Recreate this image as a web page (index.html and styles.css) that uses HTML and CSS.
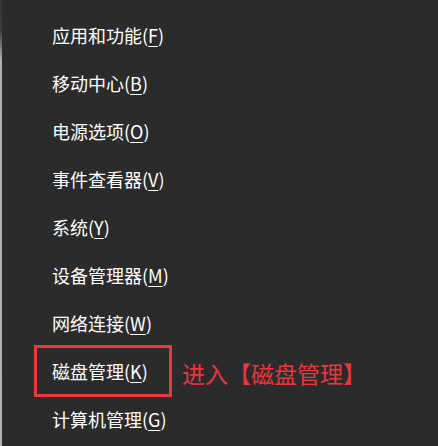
FILE: index.html
```html
<!DOCTYPE html>
<html lang="zh-CN">
<head>
<meta charset="utf-8">
<title>菜单</title>
<link rel="stylesheet" href="styles.css">
</head>
<body>
<div class="screen">
  <div class="edge"></div>
  <ul class="menu">
    <li class="item">应用和功能(<span class="key">F</span>)</li>
    <li class="item">移动中心(<span class="key">B</span>)</li>
    <li class="item">电源选项(<span class="key">O</span>)</li>
    <li class="item">事件查看器(<span class="key">V</span>)</li>
    <li class="item">系统(<span class="key">Y</span>)</li>
    <li class="item">设备管理器(<span class="key">M</span>)</li>
    <li class="item">网络连接(<span class="key">W</span>)</li>
    <li class="item item-marked">
      <span class="mark-box">磁盘管理(<span class="key">K</span>)</span>
      <span class="note">进入【磁盘管理】</span>
    </li>
    <li class="item">计算机管理(<span class="key">G</span>)</li>
  </ul>
</div>
</body>
</html>
```

FILE: styles.css
```css
html, body {
  margin: 0;
  padding: 0;
  background: #2b2b2b;
}

.screen {
  display: flex;
  width: 438px;
  height: 446px;
  overflow: hidden;
  background: #2b2b2b;
}

.edge {
  width: 2px;
  flex: none;
  background: linear-gradient(to bottom, #34372f 0px, #3a3d34 30px, #aeb2a4 60px, #b2b6a8 100%);
}

.menu {
  list-style: none;
  margin: 0;
  padding: 11px 0 0 50px;
  font-family: "Noto Sans CJK SC", "Microsoft YaHei", sans-serif;
  font-size: 18px;
  color: #ffffff;
}

.item {
  height: 48px;
  line-height: 48px;
  display: flex;
  align-items: center;
  white-space: nowrap;
}

.key {
  text-decoration: underline;
  text-decoration-thickness: 1px;
  text-underline-offset: 3px;
}

.mark-box {
  box-sizing: border-box;
  width: 138px;
  height: 52px;
  margin: -2px 0 -2px -18px;
  padding-left: 15px;
  border: 3px solid #e8383d;
  display: flex;
  align-items: center;
  line-height: 1;
}

.note {
  margin-left: 10px;
  margin-top: 4px;
  font-size: 23px;
  line-height: 1;
  color: #e8383d;
}
```
